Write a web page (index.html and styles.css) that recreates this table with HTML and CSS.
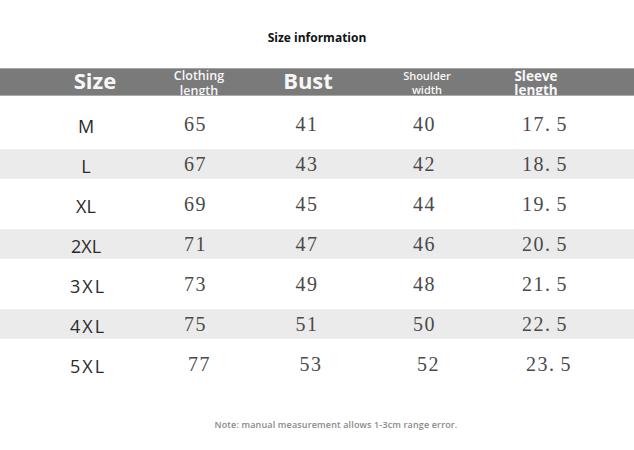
FILE: index.html
```html
<!DOCTYPE html>
<html>
<head>
<meta charset="utf-8">
<link rel="stylesheet" href="styles.css">
</head>
<body>
<div class="page">
  <h1 class="title">Size information</h1>
  <div class="head">
    <div class="hc hc-size big">Size</div>
    <div class="hc hc-len two">Clothing<br>length</div>
    <div class="hc hc-bust big">Bust</div>
    <div class="hc hc-sh two small">Shoulder<br>width</div>
    <div class="hc hc-sl two large">Sleeve<br>length</div>
  </div>
  <div class="table">
    <div class="row"><div class="c sz">M</div><div class="c n">65</div><div class="c n">41</div><div class="c n">40</div><div class="c n">17<span class="dot">.</span>5</div></div>
    <div class="row band"><div class="c sz">L</div><div class="c n">67</div><div class="c n">43</div><div class="c n">42</div><div class="c n">18<span class="dot">.</span>5</div></div>
    <div class="row"><div class="c sz">XL</div><div class="c n">69</div><div class="c n">45</div><div class="c n">44</div><div class="c n">19<span class="dot">.</span>5</div></div>
    <div class="row band"><div class="c sz">2XL</div><div class="c n">71</div><div class="c n">47</div><div class="c n">46</div><div class="c n">20<span class="dot">.</span>5</div></div>
    <div class="row"><div class="c sz wide">3XL</div><div class="c n">73</div><div class="c n">49</div><div class="c n">48</div><div class="c n">21<span class="dot">.</span>5</div></div>
    <div class="row band"><div class="c sz wide">4XL</div><div class="c n">75</div><div class="c n">51</div><div class="c n">50</div><div class="c n">22<span class="dot">.</span>5</div></div>
    <div class="row last"><div class="c sz wide">5XL</div><div class="c n">77</div><div class="c n">53</div><div class="c n">52</div><div class="c n">23<span class="dot">.</span>5</div></div>
  </div>
  <p class="note">Note: manual measurement allows 1-3cm range error.</p>
</div>
</body>
</html>
```

FILE: styles.css
```css
html, body {
  margin: 0;
  padding: 0;
  background: #ffffff;
}

.page {
  width: 634px;
  height: 450px;
  overflow: hidden;
  font-family: "Open Sans", "Noto Sans", sans-serif;
}

.title {
  margin: 30px 0 0 0;
  height: 16px;
  line-height: 16px;
  font-size: 12px;
  font-weight: 700;
  color: #111111;
  text-align: center;
}

.head {
  margin-top: 22px;
  height: 26px;
  background: #7a7a7a;
  border-top: 1px solid #a3a3a3;
  border-bottom: 1px solid #a8a8a8;
  display: grid;
  grid-template-columns: 110px 98px 120px 118px 100px;
  padding-left: 40px;
  overflow: hidden;
  color: #f7f7f7;
}

.hc {
  display: flex;
  justify-content: center;
  align-items: flex-start;
  text-align: center;
  white-space: nowrap;
}

.big {
  font-size: 22px;
  font-weight: 700;
  line-height: 22px;
}

.two {
  font-size: 12.5px;
  font-weight: 600;
  line-height: 15px;
  margin-top: -1px;
}

.two.small {
  font-size: 11px;
  line-height: 14px;
  margin-top: 0;
}

.two.large {
  font-size: 13.5px;
  font-weight: 700;
  line-height: 14px;
  margin-top: 0;
}

.table {
  margin-top: 3px;
}

.row {
  display: grid;
  grid-template-columns: 110px 109px 114px 121px 120px;
  height: 50px;
  align-items: center;
  padding-left: 31px;
}

.row.band {
  height: 30px;
  background: #ebebeb;
}

.c {
  display: flex;
  justify-content: center;
  white-space: nowrap;
}

.sz {
  font-family: "Open Sans", "Noto Sans", sans-serif;
  font-size: 18px;
  color: #2a2a2a;
  padding-top: 3px;
}

.sz.wide {
  letter-spacing: 2px;
  padding-left: 4px;
}

.n {
  font-family: "Liberation Serif", "Times New Roman", serif;
  font-size: 20px;
  letter-spacing: 1.5px;
  color: #4a4a4a;
}

.dot {
  padding-right: 5px;
}

.last .n {
  padding-left: 8px;
}

.note {
  margin: 30px 0 0 0;
  padding-left: 38px;
  text-align: center;
  font-size: 9px;
  font-weight: 600;
  letter-spacing: 0.15px;
  color: #8a8a8a;
  line-height: 12px;
}
```
